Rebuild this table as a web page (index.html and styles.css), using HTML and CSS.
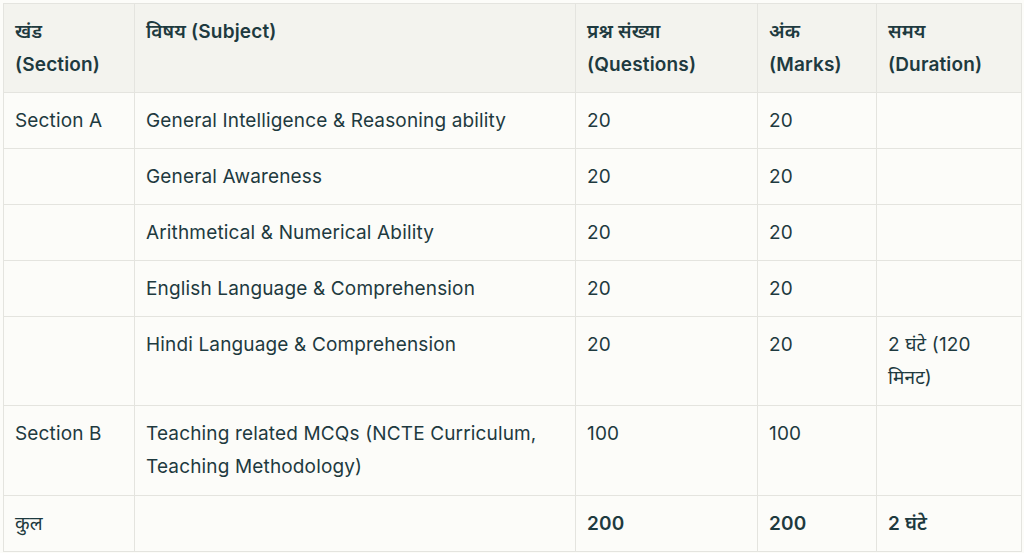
FILE: index.html
```html
<!DOCTYPE html>
<html lang="hi">
<head>
<meta charset="utf-8">
<link rel="stylesheet" href="styles.css">
</head>
<body>
<div class="wrap">
<table class="exam">
  <colgroup>
    <col class="c1"><col class="c2"><col class="c3"><col class="c4"><col class="c5">
  </colgroup>
  <thead>
    <tr>
      <th>खंड<br>(Section)</th>
      <th>विषय (Subject)</th>
      <th>प्रश्न संख्या<br>(Questions)</th>
      <th>अंक<br>(Marks)</th>
      <th>समय<br>(Duration)</th>
    </tr>
  </thead>
  <tbody>
    <tr><td>Section A</td><td>General Intelligence &amp; Reasoning ability</td><td>20</td><td>20</td><td></td></tr>
    <tr><td></td><td>General Awareness</td><td>20</td><td>20</td><td></td></tr>
    <tr><td></td><td>Arithmetical &amp; Numerical Ability</td><td>20</td><td>20</td><td></td></tr>
    <tr><td></td><td>English Language &amp; Comprehension</td><td>20</td><td>20</td><td></td></tr>
    <tr><td></td><td>Hindi Language &amp; Comprehension</td><td>20</td><td>20</td><td>2 घंटे (120 मिनट)</td></tr>
    <tr class="tall"><td>Section B</td><td>Teaching related MCQs (NCTE Curriculum, Teaching Methodology)</td><td>100</td><td>100</td><td></td></tr>
    <tr><td>कुल</td><td></td><td><strong>200</strong></td><td><strong>200</strong></td><td><strong>2 घंटे</strong></td></tr>
  </tbody>
</table>
</div>
</body>
</html>
```
FILE: styles.css
```css
html, body {
  margin: 0;
  padding: 0;
  background: #fcfcf9;
}
.wrap {
  padding: 3px 3px 0 3px;
}
.exam {
  border-collapse: collapse;
  width: 1018px;
  table-layout: fixed;
  font-family: Inter, "Noto Sans", "Noto Sans Devanagari", sans-serif;
  font-size: 19px;
  letter-spacing: 0.15px;
  line-height: 33px;
  color: #1e3a3f;
}
.c1 { width: 131px; }
.c2 { width: 441px; }
.c3 { width: 182px; }
.c4 { width: 119px; }
.c5 { width: 145px; }
.exam th, .exam td {
  border: 1px solid #e4e4df;
  padding: 11px 11px 11px 11px;
  text-align: left;
  vertical-align: top;
}
.exam .tall td {
  padding-bottom: 12px;
}
.exam th {
  background: #f3f3ee;
  font-weight: 600;
}
.exam td {
  background: #fcfcf9;
}
.exam strong {
  font-weight: 600;
}
```
